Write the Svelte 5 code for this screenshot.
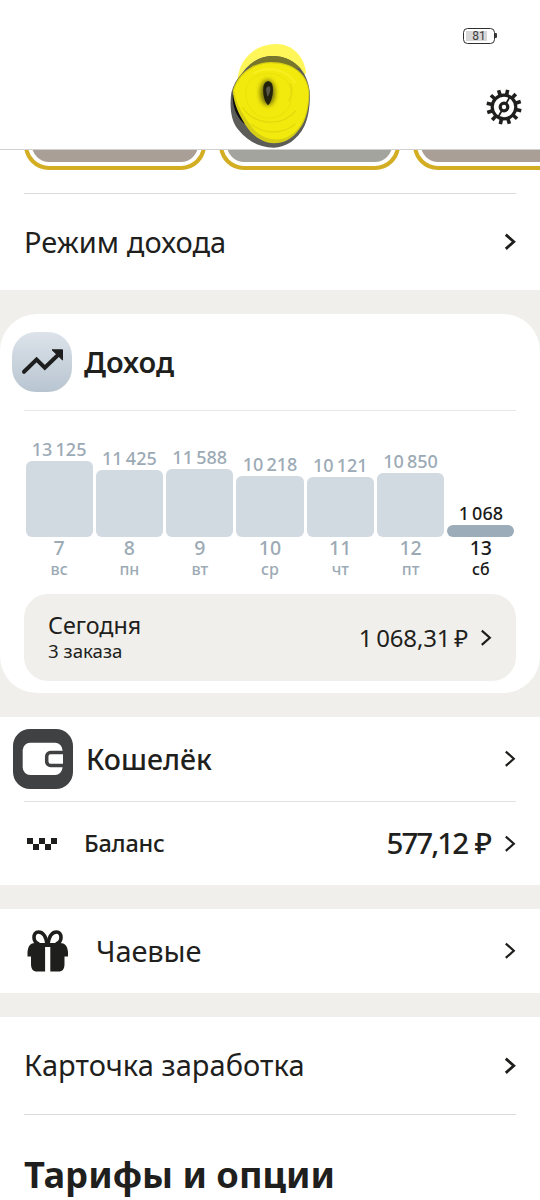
<script lang="ts">
  type Day = { amount: string; day: string; weekday: string; height: number; today?: boolean };

  const days: Day[] = [
    { amount: '13 125', day: '7', weekday: 'вс', height: 76.5 },
    { amount: '11 425', day: '8', weekday: 'пн', height: 67.5 },
    { amount: '11 588', day: '9', weekday: 'вт', height: 68.5 },
    { amount: '10 218', day: '10', weekday: 'ср', height: 61 },
    { amount: '10 121', day: '11', weekday: 'чт', height: 60.5 },
    { amount: '10 850', day: '12', weekday: 'пт', height: 64.5 },
    { amount: '1 068', day: '13', weekday: 'сб', height: 12, today: true },
  ];

  const teeth = Array.from({ length: 12 }, (_, i) => 12 + i * 30);
</script>

{#snippet chevron(thin = false)}
  <svg class="chevron" width="12" height="18" viewBox="0 0 12 18">
    <path d="M1.8 1.6 9.8 8.700l-8 7.200" fill="none" stroke="#1e1e1c" stroke-width={thin ? 2.2 : 2.8} />
  </svg>
{/snippet}

<div class="screen">
  <header>
    <div class="battery"><span>81</span></div>
    <svg class="avatar" width="120" height="135" viewBox="0 0 360 405">
      <defs>
        <filter id="soft" x="-50%" y="-50%" width="200%" height="200%"><feGaussianBlur stdDeviation="8" /></filter>
        <filter id="edge" x="-20%" y="-20%" width="140%" height="140%"><feGaussianBlur stdDeviation="2" /></filter>
      </defs>
      <g filter="url(#edge)">
        <path d="M82 205C76 125 130 72 200 72c46 0 82 36 88 85l-20 60z" fill="#fff75a" />
        <path d="M64 218C70 195 80 178 96 160 120 128 150 108 188 108c60 0 104 42 111 105 2 36-2 76-16 106-20 40-55 64-92 64-45 0-80-22-106-54C63 305 58 260 64 218z" fill="#5b5b59" />
        <path d="M112 142c20-20 46-34 76-34 36 0 62 14 84 38l-70-10z" fill="#77762c" />
        <path d="M68 225c0 40 12 66 36 88l4-46-22-40z" fill="#0c0c08" />
        <path d="M68 212C82 164 124 126 184 126c64 0 112 36 114 92 0 46-10 84-30 110-22 30-46 42-76 42-38-2-68-26-86-56-18-30-34-58-38-102z" fill="#d6ce14" />
        <path d="M72 210C88 164 130 130 184 130c62 0 108 34 111 88 0 46-10 80-30 106-22 26-44 36-72 34-30-2-56-18-74-46-20-30-42-58-47-102z" fill="#f3ea08" />
      </g>
      <g fill="none" filter="url(#edge)" opacity=".4">
        <path d="M108 206c12-56 112-66 134-2 12 56-22 92-70 90-40-2-70-44-64-88z" stroke="#e3d90a" stroke-width="4" />
        <path d="M98 262c28 50 114 64 160 10M240 190c10 20 4 40-4 54M122 312c46 34 98 30 134 0" stroke="#c9c00c" stroke-width="4" />
        <path d="M130 160c44-26 106-8 126 30" stroke="#fff83c" stroke-width="6" />
      </g>
      <ellipse cx="173" cy="218" rx="22" ry="38" fill="#6d690c" filter="url(#soft)" />
      <path d="M160 202c2-22 22-24 27-8 5 22-1 50-13 62-10-10-16-30-14-54z" fill="#22210a" filter="url(#edge)" />
      <path d="M168 208c4-12 13-12 13-2s-5 20-9 24z" fill="#57554a" filter="url(#edge)" />
    </svg>
    <svg class="gear" width="40" height="40" viewBox="-20 -20 40 40">
      <g fill="none" stroke="#1f1f1d">
        <circle r="11.8" stroke-width="3.2" />
        <circle r="3.8" stroke-width="3.2" />
        <path d="M2.4-4 6-10.4M-2.4 4-6 10.4" stroke-width="1.8" />
        {#each teeth as angle}
          <path d="M0-12V-17.6" stroke-width="3.6" transform="rotate({angle})" />
        {/each}
      </g>
    </svg>
  </header>

  <section class="mode">
    <div class="cards">
      <div class="card"><i></i></div>
      <div class="card cool"><i></i></div>
      <div class="card"><i></i></div>
    </div>
    <div class="row mode-row">
      <span class="label">Режим дохода</span>
      {@render chevron()}
    </div>
  </section>

  <section class="income">
    <div class="income-head">
      <svg width="60" height="60" viewBox="0 0 60 60">
        <defs>
          <linearGradient id="tile" x1="0" y1="0" x2="0" y2="1">
            <stop offset="0" stop-color="#dce3ea" />
            <stop offset="1" stop-color="#b8c5d0" />
          </linearGradient>
        </defs>
        <rect width="60" height="60" rx="24" fill="url(#tile)" />
        <path d="M12 39.800 24.600 27.600l8.200 8L46 23" fill="none" stroke="#1e1e1e" stroke-width="4" stroke-linecap="round" />
        <path d="M40 17.800h10.500V28z" fill="#1e1e1e" stroke="#1e1e1e" stroke-linejoin="round" />
      </svg>
      <h2 class="income-title">Доход</h2>
    </div>
    <div class="chart">
      {#each days as d}
        <div class="day" class:today={d.today}>
          <span class="amount">{d.amount}</span>
          <div class="bar" style="height: {d.height}px"></div>
          <span class="num">{d.day}</span>
          <span class="weekday">{d.weekday}</span>
        </div>
      {/each}
    </div>
    <div class="summary">
      <div class="summary-text">
        <span class="when">Сегодня</span>
        <span class="orders">3 заказа</span>
      </div>
      <span class="sum">1 068,31 ₽</span>
      {@render chevron(true)}
    </div>
  </section>

  <section class="wallet">
    <div class="row wallet-head">
      <svg width="60" height="60" viewBox="0 0 60 60">
        <rect width="60" height="60" rx="17" fill="#404143" />
        <rect x="9.7" y="13.8" width="39.8" height="32.2" rx="7.5" fill="#fff" />
        <path d="M50 23.600H37.500a3.800 3.800 0 0 0-3.800 3.800v5.200a3.800 3.800 0 0 0 3.800 3.800H50" fill="#fff" stroke="#404143" stroke-width="3.5" />
      </svg>
      <h2 class="wallet-title">Кошелёк</h2>
      {@render chevron(true)}
    </div>
    <div class="row balance">
      <svg width="30" height="12" viewBox="0 0 30 12" fill="#1e1e1c">
        <path d="M0 0h6v6H0zM12 0h6v6h-6zM24 0h6v6h-6zM6 6h6v6H6zM18 6h6v6h-6z" />
      </svg>
      <span class="balance-label">Баланс</span>
      <span class="balance-sum">577,12 ₽</span>
      {@render chevron(true)}
    </div>
  </section>

  <section class="row tips">
    <svg width="42" height="42" viewBox="0 0 42 42">
      <g fill="none" stroke="#1e1e1c" stroke-width="3.6">
        <path d="M20 14C19 7 16 2 11.500 2 8.500 2 7 4.500 7 7.500c0 3 2 5.500 5 6.500" />
        <path d="M21 14C22 7 25 2 29.500 2 32.500 2 34 4.500 34 7.500c0 3-2 5.500-5 6.500" />
      </g>
      <path d="M8 13h10.500l2-2 2 2H33c5 0 7.500 3 8 9v4.500h-3.500V34c0 5-2 7.500-6 7.500h-8.200V17h-5.200v24.500H10c-4 0-6-2.500-6-7.500v-7.500H.500V22c.500-6 3-9 7.500-9z" fill="#1e1e1c" />
    </svg>
    <span class="label tips-label">Чаевые</span>
    {@render chevron(true)}
  </section>

  <section class="last">
    <div class="row earnings">
      <span class="label">Карточка заработка</span>
      {@render chevron()}
    </div>
    <h1>Тарифы и опции</h1>
  </section>
</div>

<style>
  :global(body) {
    background: #fff;
  }
  .screen {
    width: 540px;
    height: 1200px;
    overflow: hidden;
    display: flex;
    flex-direction: column;
    gap: 24px;
    background: #f0efeb;
    color: #1f1f1d;
    font-family: 'Noto Sans', sans-serif;
    white-space: nowrap;
  }
  .screen * {
    box-sizing: border-box;
    flex-shrink: 0;
  }
  section {
    background: #fff;
  }
  svg {
    display: block;
  }
  h1,
  h2 {
    margin: 0;
  }
  header {
    position: relative;
    height: 150px;
    margin-bottom: -24px;
    background: #fff;
    border-bottom: 1px solid #d0d0d0;
  }
  .battery {
    position: absolute;
    left: 463px;
    top: 28px;
    width: 32px;
    height: 16px;
    padding: 2px;
    border: 1.5px solid #2f2f31;
    border-radius: 4.5px;
  }
  .battery::after {
    content: '';
    position: absolute;
    right: -3px;
    top: 4px;
    width: 2px;
    height: 5px;
    background: #3a3a3c;
    border-radius: 0 1px 1px 0;
  }
  .battery span {
    display: block;
    width: 21px;
    height: 10px;
    padding-left: 5px;
    background: #d8d8d8;
    font: 12px/11px Roboto, sans-serif;
    color: #3c3c3c;
    text-align: center;
  }
  .avatar {
    position: absolute;
    left: 210px;
    top: 20px;
  }
  .gear {
    position: absolute;
    left: 484px;
    top: 87px;
  }
  .mode {
    height: 140px;
    overflow: hidden;
  }
  .cards {
    display: flex;
    gap: 13px;
    height: 43px;
    padding-left: 24px;
    align-items: flex-start;
    overflow: hidden;
  }
  .card {
    width: 181.5px;
    height: 60px;
    margin-top: -40px;
    padding: 4px;
    border: 4px solid #d3ae22;
    border-radius: 25px;
  }
  .card i {
    display: block;
    height: 100%;
    background: #aa9f96;
    border-radius: 17px;
  }
  .card.cool i {
    background: #a3a49e;
  }
  .row {
    display: flex;
    align-items: center;
  }
  .chevron {
    margin-left: auto;
  }
  .label {
    margin-bottom: 1px;
    font-size: 29px;
    line-height: 40px;
    letter-spacing: 0.05px;
  }
  .mode-row {
    height: 97px;
    margin: 0 24px;
    border-top: 1px solid #dadada;
  }
  .income {
    height: 379px;
    border-radius: 37px;
  }
  .income-head {
    display: flex;
    align-items: center;
    gap: 12px;
    height: 97px;
    padding: 0 0 2px 12px;
    position: relative;
  }
  .income-head::after {
    content: '';
    position: absolute;
    left: 24px;
    right: 24px;
    bottom: 0;
    height: 1px;
    background: #e7e7e7;
  }
  .income-title {
    font-size: 29px;
    font-weight: 600;
    line-height: 40px;
  }
  .chart {
    display: flex;
    align-items: flex-end;
    gap: 3px;
    height: 169px;
    padding: 0 25.5px 1px;
  }
  .day {
    flex: 1 1 0;
    display: flex;
    flex-direction: column;
    align-items: center;
    color: #9caab5;
    font-weight: 500;
  }
  .amount {
    margin-bottom: 0.6px;
    font-size: 18px;
    line-height: 22px;
    word-spacing: -1.5px;
  }
  .bar {
    width: 100%;
    background: #d1d9e1;
    border-radius: 6px;
  }
  .num {
    font-size: 19.5px;
    line-height: 22px;
  }
  .weekday {
    font-size: 16px;
    line-height: 20px;
  }
  .today {
    color: #1a1a1a;
  }
  .today .bar {
    background: #9dacb9;
  }
  .summary {
    display: flex;
    align-items: center;
    height: 87px;
    margin: 14px 24px 0;
    padding: 0 24px;
    background: #f0efeb;
    border-radius: 24px;
  }
  .summary-text {
    display: flex;
    flex-direction: column;
  }
  .when {
    font-size: 23.3px;
    line-height: 27px;
  }
  .orders {
    font-size: 18.7px;
    line-height: 24px;
  }
  .sum {
    margin-left: auto;
    font-size: 24px;
    letter-spacing: -0.15px;
    word-spacing: -2.3px;
  }
  .sum + :global(.chevron) {
    margin-left: 12px;
  }
  .wallet {
    height: 168px;
  }
  .wallet-head {
    height: 84px;
    padding: 0 24px 0 13px;
  }
  .wallet-title {
    margin-left: 13px;
    font-size: 28.5px;
    font-weight: 500;
    line-height: 40px;
  }
  .balance {
    height: 84px;
    margin: 0 24px;
    padding-left: 3px;
    border-top: 1px solid #e2e2e2;
  }
  .balance-label {
    margin: 0 0 1px 27px;
    font-size: 23.5px;
    font-weight: 500;
    letter-spacing: -0.2px;
  }
  .balance-sum {
    margin: 0 0 2px auto;
    font-size: 29.5px;
    font-weight: 500;
    letter-spacing: -2px;
    word-spacing: 2px;
  }
  .balance-sum + :global(.chevron) {
    margin-left: 14px;
  }
  .tips {
    height: 84px;
    padding: 0 24px 0 27px;
  }
  .tips-label {
    margin-left: 27px;
    letter-spacing: -0.1px;
  }
  .last {
    height: 183px;
    padding: 0 24px;
  }
  .earnings {
    height: 98px;
    border-bottom: 1px solid #dadada;
  }
  h1 {
    margin-top: 34px;
    font-size: 36.3px;
    font-weight: 700;
    line-height: 50px;
  }
</style>
